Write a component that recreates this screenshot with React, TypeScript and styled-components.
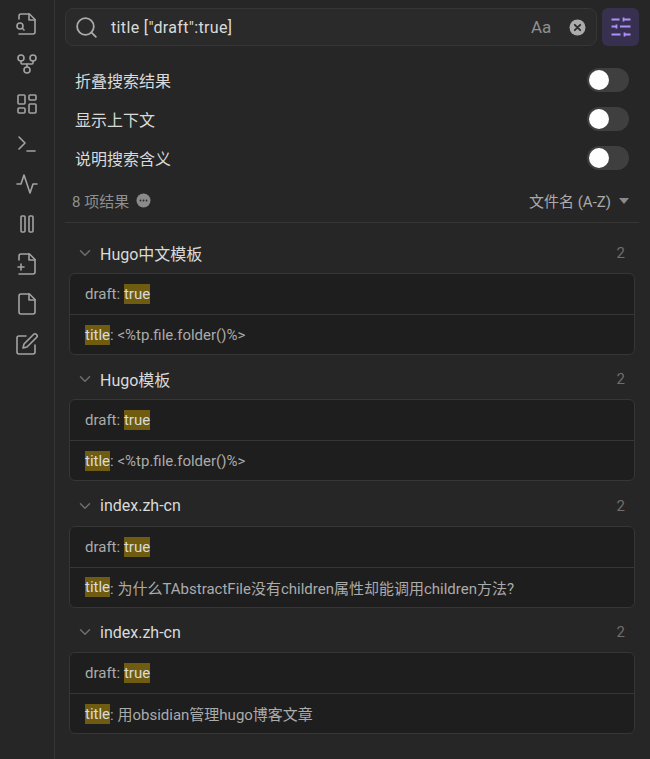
import styled, { createGlobalStyle } from "styled-components";
import { ChevronDown, GitFork, LayoutDashboard, Search, Terminal } from "lucide-react";

const GlobalStyle = createGlobalStyle`
  html, body {
    margin: 0;
    padding: 0;
    background-color: #262626;
  }
  * {
    box-sizing: border-box;
  }
`

const Page = styled.div`
  width: 650px;
  height: 759px;
  overflow: hidden;
  display: flex;
  background-color: #262626;
  color: #dadada;
  font-family: Roboto, "Noto Sans CJK SC", sans-serif;
`

const Ribbon = styled.nav`
  width: 55px;
  flex-shrink: 0;
  border-right: 1px solid #363636;
  display: flex;
  flex-direction: column;
  align-items: center;
  padding-top: 12px;
  padding-right: 1px;
  gap: 16px;
  svg {
    display: block;
    width: 24px;
    height: 24px;
    color: #a3a3a3;
    stroke-width: 1.6;
    fill: none;
    stroke: currentColor;
    stroke-linecap: round;
    stroke-linejoin: round;
  }
`

const Main = styled.main`
  flex: 1;
  padding: 8px 11px 0 10px;
`

const SearchRow = styled.div`
  display: flex;
  gap: 5px;
`

const SearchBox = styled.div`
  flex: 1;
  height: 38px;
  background-color: #2a2a2a;
  border: 1px solid #363636;
  border-radius: 8px;
  display: flex;
  align-items: center;
  padding: 0 11px 0 8px;
  color: #dadada;
  font-size: 16px;
`

const SearchIcon = styled(Search)`
  width: 25px;
  height: 25px;
  color: #ababab;
  margin-right: 12px;
  stroke-width: 1.7;
`

const Query = styled.span`
  flex: 1;
  letter-spacing: 0.35px;
  padding-top: 1px;
`

const CaseLabel = styled.span`
  width: 21px;
  margin-right: 17px;
  font-size: 17px;
  color: #8f8f8f;
`

const ClearIcon = styled.svg`
  width: 17px;
  height: 17px;
  margin-right: -1px;
`

const FilterButton = styled.button`
  width: 37px;
  height: 38px;
  padding: 0;
  border: none;
  border-radius: 6px;
  background-color: #38304f;
  color: #ad90fb;
  display: flex;
  align-items: center;
  justify-content: center;
`

const FilterIcon = styled.svg`
  width: 24px;
  height: 24px;
  fill: none;
  stroke: currentColor;
  stroke-width: 1.8;
`

const Options = styled.div`
  margin-top: 22px;
  padding: 0 10px;
  display: flex;
  flex-direction: column;
  gap: 15px;
`

const OptionRow = styled.div`
  height: 24px;
  display: flex;
  align-items: center;
  justify-content: space-between;
  font-size: 16px;
  color: #dadada;
`

const Toggle = styled.div`
  width: 42px;
  height: 24px;
  border-radius: 12px;
  background-color: #3f3f3f;
  padding: 2px;
`

const Knob = styled.div`
  width: 20px;
  height: 20px;
  border-radius: 50%;
  background-color: #fff;
`

const ResultsBar = styled.div`
  margin-top: 19px;
  height: 34px;
  padding: 0 10px 10px 7px;
  border-bottom: 1px solid #363636;
  display: flex;
  align-items: center;
  justify-content: space-between;
  font-size: 15px;
  color: #8f8f8f;
`

const ResultCount = styled.div`
  display: flex;
  align-items: center;
  gap: 7px;
`

const MoreDot = styled.svg`
  width: 15px;
  height: 15px;
`

const Sort = styled.div`
  display: flex;
  align-items: center;
  gap: 8px;
  color: #ababab;
`

const Caret = styled.span`
  width: 0;
  height: 0;
  border-left: 5.5px solid transparent;
  border-right: 5.5px solid transparent;
  border-top: 6px solid #8a8a8a;
`

const Group = styled.section`
  margin-top: 10px;
  & + & {
    margin-top: 4.4px;
  }
`

const GroupHead = styled.div`
  height: 40px;
  display: flex;
  align-items: center;
  padding: 0 14px 0 11px;
  font-size: 16px;
  color: #dadada;
`

const Chevron = styled(ChevronDown)`
  width: 18px;
  height: 18px;
  color: #6e6e6e;
  margin-right: 6px;
  stroke-width: 2;
`

const GroupTitle = styled.span`
  flex: 1;
`

const GroupCount = styled.span`
  font-size: 15px;
  color: #6e6e6e;
`

const Card = styled.div`
  margin-left: 4px;
  margin-right: 4px;
  background-color: #1e1e1e;
  border: 1px solid #363636;
  border-radius: 6px;
  overflow: hidden;
`

const Match = styled.div`
  height: 40px;
  padding: 0 15px;
  display: flex;
  align-items: center;
  white-space: pre;
  font-size: 15px;
  color: #ababab;
  & + & {
    border-top: 1px solid #363636;
  }
`

const Hit = styled.mark`
  background-color: #6f5c10;
  color: #dadada;
  line-height: 20px;
`

// older lucide shapes, the current package draws these differently
function FileSearchIcon() {
  return (
    <svg viewBox="0 0 24 24">
      <path d="M4 22h14a2 2 0 0 0 2-2V7.5L14.5 2H6a2 2 0 0 0-2 2v3" />
      <polyline points="14 2 14 8 20 8" />
      <circle cx="5" cy="14" r="3" />
      <path d="m9 18-1.5-1.5" />
    </svg>
  );
}

function ActivityIcon() {
  return (
    <svg viewBox="0 0 24 24">
      <polyline points="22 12 18 12 15 21 9 3 6 12 2 12" />
    </svg>
  );
}

function PauseIcon() {
  return (
    <svg viewBox="0 0 24 24">
      <rect x="6" y="4" width="4" height="16" rx="1" />
      <rect x="14" y="4" width="4" height="16" rx="1" />
    </svg>
  );
}

function FilePlusIcon() {
  return (
    <svg viewBox="0 0 24 24">
      <path d="M4 22h14a2 2 0 0 0 2-2V7.5L14.5 2H6a2 2 0 0 0-2 2v4" />
      <polyline points="14 2 14 8 20 8" />
      <path d="M3 15h6" />
      <path d="M6 12v6" />
    </svg>
  );
}

function FileIcon() {
  return (
    <svg viewBox="0 0 24 24">
      <path d="M14.5 2H6a2 2 0 0 0-2 2v16a2 2 0 0 0 2 2h12a2 2 0 0 0 2-2V7.5L14.5 2z" />
      <polyline points="14 2 14 8 20 8" />
    </svg>
  );
}

function EditIcon() {
  return (
    <svg viewBox="0 0 24 24">
      <path d="M11 4H4a2 2 0 0 0-2 2v14a2 2 0 0 0 2 2h14a2 2 0 0 0 2-2v-7" />
      <path d="M18.5 2.5a2.12 2.12 0 0 1 3 3L12 15l-4 1 1-4 9.5-9.5z" />
    </svg>
  );
}

const ribbonIcons = [FileSearchIcon, GitFork, LayoutDashboard, Terminal, ActivityIcon, PauseIcon, FilePlusIcon, FileIcon, EditIcon];

const options = ["折叠搜索结果", "显示上下文", "说明搜索含义"];

const groups = [
  { name: "Hugo中文模板", title: "<%tp.file.folder()%>" },
  { name: "Hugo模板", title: "<%tp.file.folder()%>" },
  { name: "index.zh-cn", title: "为什么TAbstractFile没有children属性却能调用children方法?" },
  { name: "index.zh-cn", title: "用obsidian管理hugo博客文章" },
];

function App() {
  return (
    <Page>
      <GlobalStyle />
      <Ribbon>
        {ribbonIcons.map((Icon, i) => (
          <Icon key={i} />
        ))}
      </Ribbon>
      <Main>
        <SearchRow>
          <SearchBox>
            <SearchIcon />
            <Query>title ["draft":true]</Query>
            <CaseLabel>Aa</CaseLabel>
            <ClearIcon viewBox="0 0 17 17">
              <circle cx="8.5" cy="8.5" r="8" fill="#ababab" />
              <path d="M5.8 5.8l5.4 5.4M11.2 5.8l-5.4 5.4" stroke="#2a2a2a" strokeWidth="1.8" strokeLinecap="round" />
            </ClearIcon>
          </SearchBox>
          <FilterButton>
            <FilterIcon viewBox="0 0 24 24">
              <path d="M2.5 4.5h8M14.5 4.5h7M14.5 2.5v4" />
              <path d="M2.5 11.5h5M11 11.5h10.5M7.5 9.5v4" />
              <path d="M2.5 19.5h9M15.5 19.5h6M15.5 17.5v4" />
            </FilterIcon>
          </FilterButton>
        </SearchRow>
        <Options>
          {options.map(label => (
            <OptionRow key={label}>
              {label}
              <Toggle>
                <Knob />
              </Toggle>
            </OptionRow>
          ))}
        </Options>
        <ResultsBar>
          <ResultCount>
            8 项结果
            <MoreDot viewBox="0 0 15 15">
              <circle cx="7.5" cy="7.5" r="7" fill="#8a8a8a" />
              <circle cx="4.5" cy="7.5" r="0.9" fill="#2a2a2a" />
              <circle cx="7.5" cy="7.5" r="0.9" fill="#2a2a2a" />
              <circle cx="10.5" cy="7.5" r="0.9" fill="#2a2a2a" />
            </MoreDot>
          </ResultCount>
          <Sort>
            文件名 (A-Z)
            <Caret />
          </Sort>
        </ResultsBar>
        {groups.map((group, i) => (
          <Group key={i}>
            <GroupHead>
              <Chevron />
              <GroupTitle>{group.name}</GroupTitle>
              <GroupCount>2</GroupCount>
            </GroupHead>
            <Card>
              <Match>
                draft: <Hit>true</Hit>
              </Match>
              <Match>
                <Hit>title</Hit>: {group.title}
              </Match>
            </Card>
          </Group>
        ))}
      </Main>
    </Page>
  );
}

export default App;
